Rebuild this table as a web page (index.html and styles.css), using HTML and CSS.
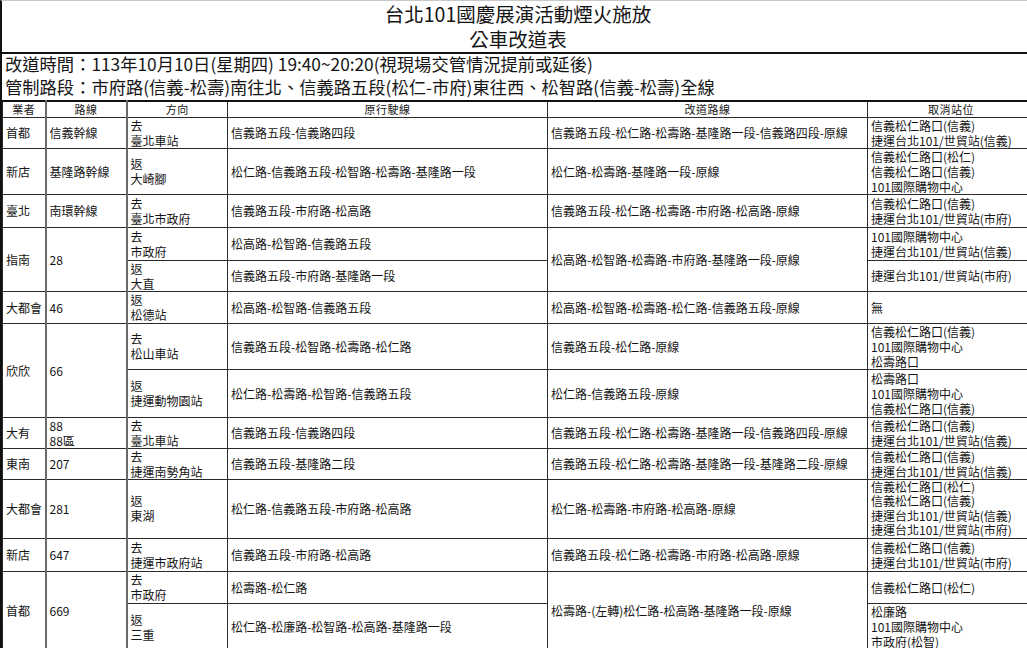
FILE: index.html
```html
<!DOCTYPE html>
<html lang="zh-Hant">
<head>
<meta charset="utf-8">
<title>公車改道表</title>
<link rel="stylesheet" href="styles.css">
</head>
<body>
<div class="sheet">
  <div class="title t1">台北101國慶展演活動煙火施放</div>
  <div class="title">公車改道表</div>
  <div class="info first">改道時間：113年10月10日(星期四) 19:40~20:20(視現場交管情況提前或延後)</div>
  <div class="info">管制路段：市府路(信義-松壽)南往北、信義路五段(松仁-市府)東往西、松智路(信義-松壽)全線</div>
  <table class="grid">
    <colgroup>
      <col class="k1"><col class="k2"><col class="k3"><col class="k4"><col class="k5"><col class="k6">
    </colgroup>
    <tr class="head">
      <td>業者</td><td>路線</td><td>方向</td><td>原行駛線</td><td>改道路線</td><td>取消站位</td>
    </tr>
    <tr class="h30">
      <td>首都</td><td>信義幹線</td><td>去<br>臺北車站</td><td>信義路五段-信義路四段</td><td>信義路五段-松仁路-松壽路-基隆路一段-信義路四段-原線</td><td>信義松仁路口(信義)<br>捷運台北101/世貿站(信義)</td>
    </tr>
    <tr class="h45">
      <td>新店</td><td>基隆路幹線</td><td>返<br>大崎腳</td><td>松仁路-信義路五段-松智路-松壽路-基隆路一段</td><td>松仁路-松壽路-基隆路一段-原線</td><td>信義松仁路口(松仁)<br>信義松仁路口(信義)<br>101國際購物中心</td>
    </tr>
    <tr class="h34">
      <td>臺北</td><td>南環幹線</td><td>去<br>臺北市政府</td><td>信義路五段-市府路-松高路</td><td>信義路五段-松仁路-松壽路-市府路-松高路-原線</td><td>信義松仁路口(信義)<br>捷運台北101/世貿站(市府)</td>
    </tr>
    <tr class="h33">
      <td rowspan="2">指南</td><td rowspan="2">28</td><td>去<br>市政府</td><td>松高路-松智路-信義路五段</td><td rowspan="2">松高路-松智路-松壽路-市府路-基隆路一段-原線</td><td>101國際購物中心<br>捷運台北101/世貿站(信義)</td>
    </tr>
    <tr class="h32">
      <td>返<br>大直</td><td>信義路五段-市府路-基隆路一段</td><td>捷運台北101/世貿站(市府)</td>
    </tr>
    <tr class="h32">
      <td>大都會</td><td>46</td><td>返<br>松德站</td><td>松高路-松智路-信義路五段</td><td>松高路-松智路-松壽路-松仁路-信義路五段-原線</td><td>無</td>
    </tr>
    <tr class="h47">
      <td rowspan="2">欣欣</td><td rowspan="2">66</td><td>去<br>松山車站</td><td>信義路五段-松智路-松壽路-松仁路</td><td>信義路五段-松仁路-原線</td><td>信義松仁路口(信義)<br>101國際購物中心<br>松壽路口</td>
    </tr>
    <tr class="h48">
      <td>返<br>捷運動物園站</td><td>松仁路-松壽路-松智路-信義路五段</td><td>松仁路-信義路五段-原線</td><td>松壽路口<br>101國際購物中心<br>信義松仁路口(信義)</td>
    </tr>
    <tr class="h29">
      <td>大有</td><td>88<br>88區</td><td>去<br>臺北車站</td><td>信義路五段-信義路四段</td><td>信義路五段-松仁路-松壽路-基隆路一段-信義路四段-原線</td><td>信義松仁路口(信義)<br>捷運台北101/世貿站(信義)</td>
    </tr>
    <tr class="h31">
      <td>東南</td><td>207</td><td>去<br>捷運南勢角站</td><td>信義路五段-基隆路二段</td><td>信義路五段-松仁路-松壽路-基隆路一段-基隆路二段-原線</td><td>信義松仁路口(信義)<br>捷運台北101/世貿站(信義)</td>
    </tr>
    <tr class="h60">
      <td>大都會</td><td>281</td><td>返<br>東湖</td><td>松仁路-信義路五段-市府路-松高路</td><td>松仁路-松壽路-市府路-松高路-原線</td><td>信義松仁路口(松仁)<br>信義松仁路口(信義)<br>捷運台北101/世貿站(信義)<br>捷運台北101/世貿站(市府)</td>
    </tr>
    <tr class="h33">
      <td>新店</td><td>647</td><td>去<br>捷運市政府站</td><td>信義路五段-市府路-松高路</td><td>信義路五段-松仁路-松壽路-市府路-松高路-原線</td><td>信義松仁路口(信義)<br>捷運台北101/世貿站(市府)</td>
    </tr>
    <tr class="h33">
      <td rowspan="2">首都</td><td rowspan="2">669</td><td>去<br>市政府</td><td>松壽路-松仁路</td><td rowspan="2">松壽路-(左轉)松仁路-松高路-基隆路一段-原線</td><td>信義松仁路口(松仁)</td>
    </tr>
    <tr class="h46">
      <td>返<br>三重</td><td>松仁路-松廉路-松智路-松高路-基隆路一段</td><td>松廉路<br>101國際購物中心<br>市政府(松智)</td>
    </tr>
  </table>
</div>
</body>
</html>
```

FILE: styles.css
```css
html, body {
  margin: 0;
  padding: 0;
  background: #fff;
  overflow: hidden;
}
body {
  font-family: "Noto Sans CJK TC", "Noto Sans", sans-serif;
  color: #151515;
}
.sheet {
  width: 1034px;
  box-sizing: border-box;
  border-left: 2px solid #111;
  border-top: 1px solid #c8c8c8;
}
.title {
  height: 26px;
  line-height: 26px;
  font-size: 19.5px;
  text-align: center;
  white-space: nowrap;
}
.title.t1 {
  height: 25px;
  line-height: 25px;
}
.info {
  height: 23px;
  line-height: 20px;
  font-size: 17.3px;
  padding-left: 3px;
  white-space: nowrap;
}
.info.first {
  border-top: 2px solid #111;
}
.grid {
  border-collapse: collapse;
  table-layout: fixed;
  width: 1032px;
  border-top: 2px solid #111;
}
.k1 { width: 43px; border-right: 2px solid #6a6a6a; }
.k2 { width: 81px; border-right: 2px solid #6a6a6a; }
.k3 { width: 101px; }
.k4 { width: 320px; }
.k5 { width: 320px; }
.k6 { width: 167px; }
.grid td {
  border: 1px solid #2a2a2a;
  padding: 0 3px;
  font-size: 12px;
  line-height: 15px;
  vertical-align: middle;
  white-space: nowrap;
  overflow: hidden;
}
.head td {
  font-size: 11px;
  line-height: 14px;
  text-align: center;
  letter-spacing: 0.5px;
}
.head { height: 16px; }
.h29 { height: 28.5px; }
.h30 { height: 29.5px; }
.h31 { height: 30.5px; }
.h32 { height: 31.5px; }
.h33 { height: 32.5px; }
.h34 { height: 33.5px; }
.h45 { height: 44.5px; }
.h46 { height: 45.5px; }
.h47 { height: 46.5px; }
.h48 { height: 47.5px; }
.h60 { height: 59.5px; }
.h60 td { line-height: 14.5px; }
```
